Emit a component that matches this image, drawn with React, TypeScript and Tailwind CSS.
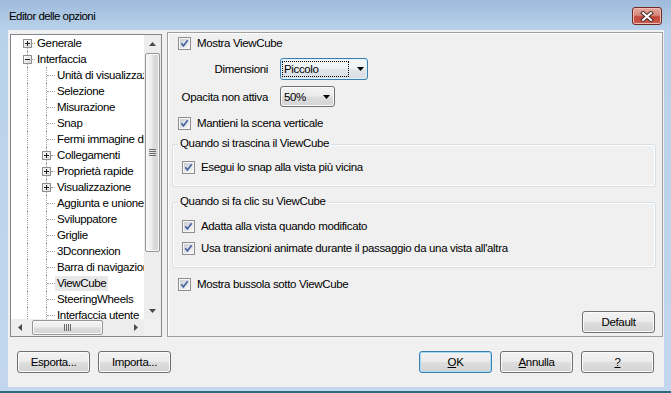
import React from "react";

type Item = { t: string; lvl: 0 | 1; box?: "plus" | "minus"; sel?: boolean };

const items: Item[] = [
  { t: "Generale", lvl: 0, box: "plus" },
  { t: "Interfaccia", lvl: 0, box: "minus" },
  { t: "Unità di visualizzazione", lvl: 1 },
  { t: "Selezione", lvl: 1 },
  { t: "Misurazione", lvl: 1 },
  { t: "Snap", lvl: 1 },
  { t: "Fermi immagine di schermo", lvl: 1 },
  { t: "Collegamenti", lvl: 1, box: "plus" },
  { t: "Proprietà rapide", lvl: 1, box: "plus" },
  { t: "Visualizzazione", lvl: 1, box: "plus" },
  { t: "Aggiunta e unione", lvl: 1 },
  { t: "Sviluppatore", lvl: 1 },
  { t: "Griglie", lvl: 1 },
  { t: "3Dconnexion", lvl: 1 },
  { t: "Barra di navigazione", lvl: 1 },
  { t: "ViewCube", lvl: 1, sel: true },
  { t: "SteeringWheels", lvl: 1 },
  { t: "Interfaccia utente", lvl: 1 },
];

function CheckIcon() {
  return (
    <svg width="13" height="13" viewBox="0 0 13 13" className="shrink-0">
      <defs>
        <linearGradient id="cbg" x1="0" y1="0" x2="1" y2="1">
          <stop offset="0" stopColor="#cbced4" />
          <stop offset="1" stopColor="#f6f6f6" />
        </linearGradient>
      </defs>
      <rect x="0.5" y="0.5" width="12" height="12" fill="#f6f6f6" stroke="#8f8f8f" />
      <rect x="2" y="2" width="9" height="9" fill="url(#cbg)" />
      <path d="M3.3 6.3 L5.4 8.9 L9.7 3.3" fill="none" stroke="#4862a3" strokeWidth="1.7" />
    </svg>
  );
}

function Check({ label, className = "" }: { label: string; className?: string }) {
  return (
    <div className={"flex items-center gap-[6px] h-[20px] " + className}>
      <CheckIcon />
      <span className="leading-[14px] whitespace-nowrap">{label}</span>
    </div>
  );
}

function Arrow() {
  return (
    <svg width="7" height="4" viewBox="0 0 7 4" className="shrink-0">
      <path d="M0 0 H7 L3.5 4 Z" fill="#000" />
    </svg>
  );
}

function Btn({
  children,
  focused = false,
}: {
  children: React.ReactNode;
  focused?: boolean;
}) {
  return (
    <div
      className={
        "w-[73px] h-[22px] rounded-[3px] border flex items-center justify-center leading-[14px] bg-[linear-gradient(180deg,#f3f3f3_0%,#ebebeb_48%,#dedede_52%,#d3d3d3_100%)] " +
        (focused
          ? "border-[#3c7fb1] shadow-[inset_0_0_0_1px_#a7dcf5]"
          : "border-[#707070] shadow-[inset_0_0_0_1px_#fafafa]")
      }
    >
      {children}
    </div>
  );
}

function TBox({ minus }: { minus: boolean }) {
  return (
    <svg width="9" height="9" viewBox="0 0 9 9">
      <defs>
        <linearGradient id="tbg" x1="0" y1="0" x2="1" y2="1">
          <stop offset="0" stopColor="#ffffff" />
          <stop offset="1" stopColor="#d6d6d6" />
        </linearGradient>
      </defs>
      <rect x="0.5" y="0.5" width="8" height="8" fill="url(#tbg)" stroke="#919191" />
      <path d="M2 4.5H7" stroke="#1e1e1e" />
      {!minus && <path d="M4.5 2V7" stroke="#1e1e1e" />}
    </svg>
  );
}

function TreeRow({ it, i }: { it: Item; i: number }) {
  return (
    <div className="relative h-[16px] shrink-0 flex items-center">
      <span
        className={
          "absolute left-[16px] bottom-0 border-l border-dotted border-[#a0a0a0] " +
          (i === 0 ? "top-[8px]" : "top-0")
        }
      />
      {it.lvl === 1 && (
        <span className="absolute left-[35px] top-0 bottom-0 border-l border-dotted border-[#a0a0a0]" />
      )}
      {it.lvl === 0 ? (
        <>
          <span className="absolute left-[20px] w-[4px] top-[8px] border-t border-dotted border-[#a0a0a0]" />
          <span className="absolute left-[12px] top-[4px] flex">
            <TBox minus={it.box === "minus"} />
          </span>
        </>
      ) : it.box ? (
        <>
          <span className="absolute left-[40px] w-[4px] top-[8px] border-t border-dotted border-[#a0a0a0]" />
          <span className="absolute left-[31px] top-[4px] flex">
            <TBox minus={false} />
          </span>
        </>
      ) : (
        <span className="absolute left-[36px] w-[8px] top-[8px] border-t border-dotted border-[#a0a0a0]" />
      )}
      <span
        className={
          "h-[15px] leading-[15px] px-[2px] whitespace-nowrap " +
          (it.lvl === 0 ? "ml-[24px] " : "ml-[44px] ") +
          (it.sel ? "bg-[#e8e8e8]" : "")
        }
      >
        {it.t}
      </span>
    </div>
  );
}

function Tree() {
  return (
    <div className="mt-[2px] w-[152px] h-[303px] border border-[#828790] bg-white flex flex-col">
      <div className="flex h-[284px]">
        <div className="w-[133px] h-full overflow-hidden flex flex-col">
          {items.map((it, i) => (
            <TreeRow key={i} it={it} i={i} />
          ))}
        </div>
        <div className="w-[17px] h-full flex flex-col bg-[#ededed]">
          <div className="h-[17px] flex items-center justify-center">
            <svg width="7" height="4" viewBox="0 0 7 4">
              <path d="M3.5 0 L7 4 H0 Z" fill="#4a4a4a" />
            </svg>
          </div>
          <div className="flex-1 flex flex-col pt-[1px] px-[1px]">
            <div className="h-[199px] rounded-[2px] border border-[#979797] bg-[linear-gradient(90deg,#f6f6f6_0%,#ececec_45%,#dcdcdc_55%,#d4d4d4_100%)] shadow-[inset_0_0_0_1px_#f8f8f8] flex items-center justify-center">
              <svg width="7" height="7" viewBox="0 0 7 7">
                <path d="M0 0.5H7M0 2.5H7M0 4.5H7M0 6.5H7" stroke="#6a6a6a" />
              </svg>
            </div>
          </div>
          <div className="h-[17px] flex items-center justify-center">
            <svg width="7" height="4" viewBox="0 0 7 4">
              <path d="M0 0 H7 L3.5 4 Z" fill="#4a4a4a" />
            </svg>
          </div>
        </div>
      </div>
      <div className="h-[17px] flex">
        <div className="w-[133px] h-full flex bg-[#ededed]">
          <div className="w-[17px] flex items-center justify-center">
            <svg width="4" height="7" viewBox="0 0 4 7">
              <path d="M0 3.5 L4 0 V7 Z" fill="#4a4a4a" />
            </svg>
          </div>
          <div className="flex-1 flex py-[1px] pl-[4px]">
            <div className="w-[71px] h-full rounded-[2px] border border-[#979797] bg-[linear-gradient(180deg,#f6f6f6_0%,#ececec_45%,#dcdcdc_55%,#d4d4d4_100%)] shadow-[inset_0_0_0_1px_#f8f8f8] flex items-center justify-center">
              <svg width="7" height="7" viewBox="0 0 7 7">
                <path d="M0.5 0V7M2.5 0V7M4.5 0V7M6.5 0V7" stroke="#6a6a6a" />
              </svg>
            </div>
          </div>
          <div className="w-[17px] flex items-center justify-center">
            <svg width="4" height="7" viewBox="0 0 4 7">
              <path d="M4 3.5 L0 0 V7 Z" fill="#4a4a4a" />
            </svg>
          </div>
        </div>
        <div className="w-[17px] h-full bg-[#f0f0f0]" />
      </div>
    </div>
  );
}

function Group({
  title,
  children,
  className = "",
}: {
  title: string;
  children: React.ReactNode;
  className?: string;
}) {
  return (
    <div
      className={
        "relative rounded-[3px] border border-[#d5dfe5] shadow-[inset_0_0_0_1px_#ffffff] flex flex-col pl-[9px] pb-[9px] " +
        className
      }
    >
      <span className="absolute left-[5px] -top-[9px] px-[2px] bg-[#f0f0f0] leading-[14px] whitespace-nowrap">
        {title}
      </span>
      {children}
    </div>
  );
}

function RightPanel() {
  return (
    <div className="ml-[5px] w-[496px] h-[305px] border border-[#a0a0a0] shadow-[inset_1px_1px_0_#ffffff] flex flex-col pl-[4px] pr-[6px]">
      <Check label="Mostra ViewCube" className="ml-[6px]" />
      <div className="ml-[6px] mt-[5px] h-[22px] flex items-center">
        <span className="w-[90px] text-right leading-[14px] whitespace-nowrap">Dimensioni</span>
        <div className="ml-[12px] w-[88px] h-[22px] rounded-[3px] border border-[#3c7fb1] shadow-[inset_0_0_0_1px_#dff2fc] bg-[linear-gradient(180deg,#f6f9fb_0%,#eef2f5_48%,#e1e6ea_52%,#d8dee3_100%)] flex items-center pl-[1px] pr-[3px]">
          <div className="w-[67px] h-[16px] border border-dotted border-black flex items-center pl-[1px] leading-[14px]">
            Piccolo
          </div>
          <div className="flex-1" />
          <Arrow />
        </div>
      </div>
      <div className="ml-[6px] mt-[6px] h-[21px] flex items-center">
        <span className="w-[90px] text-right leading-[14px] whitespace-nowrap">Opacita non attiva</span>
        <div className="ml-[12px] w-[55px] h-[21px] rounded-[3px] border border-[#707070] shadow-[inset_0_0_0_1px_#fafafa] bg-[linear-gradient(180deg,#f3f3f3_0%,#ebebeb_48%,#dedede_52%,#d3d3d3_100%)] flex items-center pl-[3px] pr-[4px]">
          <span className="leading-[14px]">50%</span>
          <div className="flex-1" />
          <Arrow />
        </div>
      </div>
      <Check label="Mantieni la scena verticale" className="ml-[6px] mt-[6px]" />
      <Group title="Quando si trascina il ViewCube" className="mt-[11px] pt-[12px]">
        <Check label="Esegui lo snap alla vista più vicina" />
      </Group>
      <Group title="Quando si fa clic su ViewCube" className="mt-[15px] pt-[13px]">
        <Check label="Adatta alla vista quando modificato" />
        <Check label="Usa transizioni animate durante il passaggio da una vista all'altra" className="mt-[2px]" />
      </Group>
      <Check label="Mostra bussola sotto ViewCube" className="ml-[6px] mt-[6px]" />
      <div className="mt-[17px] flex justify-end pr-[1px]">
        <Btn>Default</Btn>
      </div>
    </div>
  );
}

export default function App() {
  return (
    <div className="w-[671px] h-[393px] flex flex-col overflow-hidden bg-[linear-gradient(180deg,#9fbbdb_0px,#b9d1ea_30px,#c2d7ee_100%)] font-['Liberation_Sans',Arial,sans-serif] text-[11.5px] tracking-[-0.35px] text-black">
      <div className="h-[30px] shrink-0 flex items-start">
        <span className="ml-[9px] mt-[9px] text-[11.5px] leading-[14px] tracking-[-0.55px] text-[#000]">
          Editor delle opzioni
        </span>
        <div className="ml-auto mr-[9px] mt-[7px] w-[30px] h-[18px] rounded-[3px] border border-[#6e2a24] bg-[linear-gradient(180deg,#e7aa9f_0%,#d7877b_45%,#c4473a_55%,#c95c4f_100%)] shadow-[inset_0_0_0_1px_#f0bdb4] flex items-center justify-center">
          <svg width="14" height="11" viewBox="0 0 14 11">
            <path d="M3 2 L11 9 M11 2 L3 9" stroke="#4a2a2a" strokeWidth="4" strokeLinecap="square" />
            <path d="M3 2 L11 9 M11 2 L3 9" stroke="#ffffff" strokeWidth="2" strokeLinecap="square" />
          </svg>
        </div>
      </div>
      <div className="ml-[8px] w-[656px] h-[357px] shrink-0 bg-[#f0f0f0] flex flex-col">
        <div className="flex items-start pt-[2px] pl-[2px]">
          <Tree />
          <RightPanel />
        </div>
        <div className="flex pt-[14px] pl-[9px] pr-[10px] gap-[8px]">
          <Btn>Esporta...</Btn>
          <Btn>Importa...</Btn>
          <div className="flex-1" />
          <Btn focused>
            <span className="underline">O</span>K
          </Btn>
          <Btn>
            <span className="underline">A</span>nnulla
          </Btn>
          <Btn>
            <span className="underline">?</span>
          </Btn>
        </div>
      </div>
      <div className="h-[4px] shrink-0" />
      <div className="h-[2px] shrink-0 bg-[#2e6b7c]" />
    </div>
  );
}
